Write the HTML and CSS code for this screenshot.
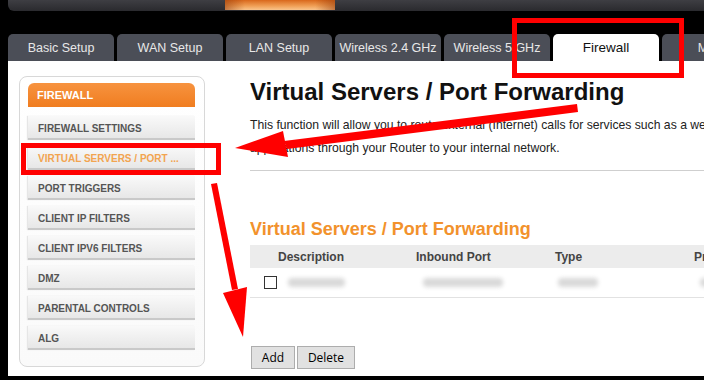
FILE: index.html
```html
<!DOCTYPE html>
<html lang="en">
<head>
    <meta charset="UTF-8">
    <title>Firewall - Virtual Servers / Port Forwarding</title>
    <link rel="stylesheet" href="styles.css">
</head>
<body>
    <div class="topbar">
        <div class="glow"></div>
    </div>
    <nav class="tabs">
        <div class="tab">Basic Setup</div>
        <div class="tab">WAN Setup</div>
        <div class="tab">LAN Setup</div>
        <div class="tab">Wireless 2.4 GHz</div>
        <div class="tab">Wireless 5 GHz</div>
        <div class="tab active">Firewall</div>
        <div class="tab">MoCA</div>
    </nav>
    <div class="page">
        <aside class="sidebar">
            <div class="side-title">Firewall</div>
            <ul class="side-menu">
                <li>Firewall Settings</li>
                <li class="current">Virtual Servers / Port ...</li>
                <li>Port Triggers</li>
                <li>Client IP Filters</li>
                <li>Client IPv6 Filters</li>
                <li>DMZ</li>
                <li>Parental Controls</li>
                <li>ALG</li>
            </ul>
        </aside>
        <main class="content">
            <h1>Virtual Servers / Port Forwarding</h1>
            <p class="intro">This function will allow you to route external (Internet) calls for services such as a web server (port 80), FTP server (Port 21), or other<br>applications through your Router to your internal network.</p>
            <hr class="divider">
            <h2>Virtual Servers / Port Forwarding</h2>
            <div class="rules">
                <div class="rules-head">
                    <span></span>
                    <span>Description</span>
                    <span>Inbound Port</span>
                    <span>Type</span>
                    <span>Private IP Address</span>
                </div>
                <div class="rules-row">
                    <span><span class="check"></span></span>
                    <span><span class="blur b-desc"></span></span>
                    <span><span class="blur b-port"></span></span>
                    <span><span class="blur b-type"></span></span>
                    <span><span class="blur b-ip"></span></span>
                </div>
            </div>
            <div class="actions">
                <button class="btn btn-add">Add</button>
                <button class="btn btn-delete">Delete</button>
            </div>
        </main>
    </div>
    <svg class="marks" width="704" height="380" viewBox="0 0 704 380">
        <rect x="514.5" y="20.5" width="167" height="55" fill="none" stroke="#f00" stroke-width="5"/>
        <rect x="23.5" y="145.5" width="195" height="27" fill="none" stroke="#f00" stroke-width="5"/>
        <polygon points="577,104 578,112 287,149 284,141" fill="#f00"/>
        <polygon points="235,148 283,131 288,157" fill="#f00"/>
        <polygon points="211,184 217,183 238,289 232,290" fill="#f00"/>
        <polygon points="223,293 247,287 243,337" fill="#f00"/>
    </svg>
</body>
</html>
```

FILE: styles.css
```css
body {
    margin: 0;
    width: 704px;
    height: 380px;
    overflow: hidden;
    position: relative;
    background: #000;
    font-family: "Liberation Sans", Arial, sans-serif;
}

.topbar {
    display: flex;
    margin-left: 8px;
    padding-left: 217px;
    height: 11px;
    background: linear-gradient(#3e3e43, #2a2a2e);
    border-bottom-left-radius: 6px;
}

.glow {
    width: 110px;
    height: 10px;
    background:
        linear-gradient(90deg, rgba(150, 60, 10, 0.55), rgba(0, 0, 0, 0) 18%, rgba(0, 0, 0, 0) 82%, rgba(150, 60, 10, 0.55)),
        linear-gradient(#d9681c, #f0a057 60%, #f9c48c);
}

.tabs {
    display: flex;
    gap: 3px;
    margin: 23px 0 0 8px;
    height: 27px;
}

.tab {
    flex: 0 0 106px;
    display: flex;
    align-items: center;
    justify-content: center;
    background: #4b4e57;
    border-radius: 5px 5px 0 0;
    color: #e8e8e8;
    font-size: 12.5px;
    white-space: nowrap;
    overflow: hidden;
}

.tab.active {
    background: #fff;
    color: #111;
    font-size: 13.5px;
}

.page {
    display: flex;
    margin-left: 8px;
    height: 315px;
    background: #fff;
    overflow: hidden;
}

.sidebar {
    flex: 0 0 186px;
    box-sizing: border-box;
    height: 291px;
    margin: 15px 0 0 11px;
    padding: 6px 9px 0 8px;
    border: 1px solid #d8d8d8;
    border-radius: 8px;
    background: linear-gradient(#fff, #fafafa);
}

.side-title {
    height: 24px;
    line-height: 25px;
    padding-left: 9px;
    border-radius: 6px 6px 0 0;
    background: linear-gradient(#f7933f, #f07d20);
    color: #fff;
    font-size: 11px;
    font-weight: bold;
    text-transform: uppercase;
}

.side-menu {
    list-style: none;
    margin: 9px 0 0;
    padding: 0;
}

.side-menu li {
    box-sizing: border-box;
    height: 24px;
    line-height: 25px;
    margin-bottom: 6px;
    padding-left: 10px;
    background: linear-gradient(#f9f9f9, #e7e7e7);
    border-bottom: 2px solid #c9c9c9;
    box-shadow: -1px 0 1px #e6e6e6;
    color: #555;
    font-size: 10px;
    font-weight: bold;
    text-transform: uppercase;
    white-space: nowrap;
}

.side-menu li.current {
    color: #f2a450;
}

.content {
    flex: 1;
    min-width: 0;
    margin-left: 45px;
}

.content h1 {
    margin: 17px 0 0;
    font-size: 24px;
    line-height: 28px;
    color: #111;
}

.intro {
    margin: 8px 0 0;
    font-size: 12.2px;
    line-height: 23px;
    color: #222;
    white-space: nowrap;
}

.divider {
    margin: 10px 0 0;
    border: 0;
    border-top: 1px solid #cfcfcf;
}

.content h2 {
    margin: 47px 0 0;
    font-size: 18px;
    line-height: 22px;
    color: #f2922c;
}

.rules {
    margin-top: 5px;
    white-space: nowrap;
}

.rules-head,
.rules-row {
    display: grid;
    grid-template-columns: 28px 138px 139px 139px 1fr;
    align-items: center;
}

.rules-head {
    height: 23px;
    background: #ececec;
    color: #444;
    font-size: 12px;
    font-weight: bold;
}

.rules-row {
    height: 29px;
    border-bottom: 1px solid #e2e2e2;
}

.check {
    display: block;
    width: 11px;
    height: 11px;
    margin-left: 14px;
    border: 1px solid #333;
}

.blur {
    display: block;
    height: 9px;
    border-radius: 4px;
    background: #d9d9d9;
    filter: blur(2px);
}

.b-desc { width: 57px; margin-left: 10px; }
.b-port { width: 80px; margin-left: 7px; }
.b-type { width: 40px; margin-left: 3px; }
.b-ip { width: 40px; margin-left: 6px; }

.actions {
    display: flex;
    gap: 2px;
    margin: 48px 0 0 1px;
}

.btn {
    height: 23px;
    padding: 0;
    background: #e1e1e1;
    border: 1px solid #adadad;
    border-radius: 0;
    color: #000;
    font-family: "Open Sans", "Noto Sans", sans-serif;
    font-size: 12px;
}

.btn-add { width: 44px; }
.btn-delete { width: 58px; }

.marks {
    position: absolute;
    top: 0;
    left: 0;
    pointer-events: none;
}
```
